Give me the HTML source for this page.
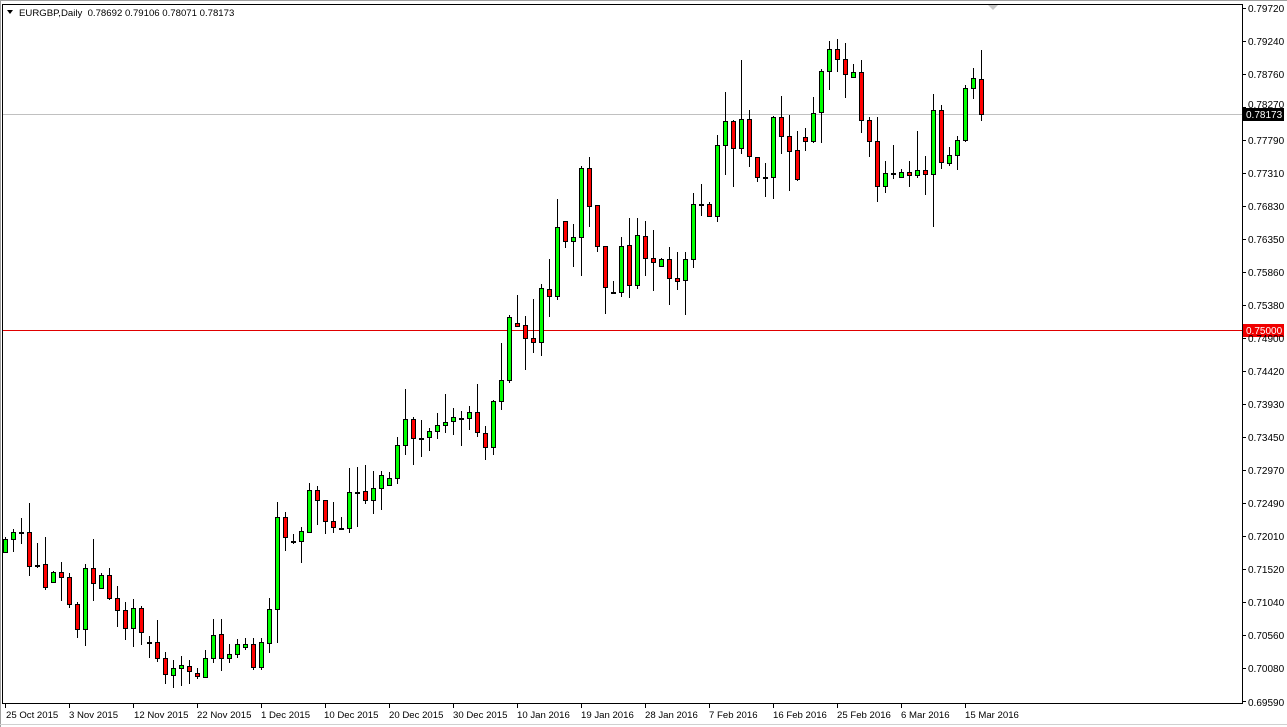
<!DOCTYPE html>
<html><head><meta charset="utf-8">
<style>
html,body{margin:0;padding:0;background:#fff;width:1287px;height:727px;overflow:hidden}
svg{display:block}
text{font-family:"Liberation Sans",sans-serif;font-size:9.6px;fill:#000}
text.y{font-size:10px}
</style></head><body>
<svg id="c" width="1287" height="727" xmlns="http://www.w3.org/2000/svg">
<rect x="0" y="0" width="1287" height="727" fill="#fff"/>
<line x1="0" y1="0.5" x2="1287" y2="0.5" stroke="#a0a0a0"/>
<line x1="0.5" y1="0" x2="0.5" y2="727" stroke="#a0a0a0"/>
<line x1="0" y1="724.5" x2="1287" y2="724.5" stroke="#d0d0d0"/>
<rect x="2.5" y="4.5" width="1240" height="699" fill="none" stroke="#000"/>
<polygon points="988,5 998,5 993,10" fill="#c8c8c8"/>
<line x1="3" y1="114.5" x2="1242" y2="114.5" stroke="#c0c0c0"/>
<line x1="3" y1="330.5" x2="1242" y2="330.5" stroke="#e00000"/>
<g id="candles"></g>
<polygon points="7,10 13,10 10,14" fill="#000"/>
<text x="19" y="16">EURGBP,Daily&#160; 0.78692 0.79106 0.78071 0.78173</text>
<g id="yax"></g>
<rect x="1243" y="108" width="41" height="13" fill="#000"/>
<text class="y" x="1246" y="118" style="fill:#fff">0.78173</text>
<rect x="1243" y="324" width="41" height="13" fill="#f00000"/>
<text class="y" x="1246" y="334" style="fill:#fff">0.75000</text>
<g id="xax"></g>
<text x="6" y="718">25 Oct 2015</text>
<text x="69" y="718">3 Nov 2015</text>
<text x="134" y="718">12 Nov 2015</text>
<text x="197" y="718">22 Nov 2015</text>
<text x="261" y="718">1 Dec 2015</text>
<text x="324" y="718">10 Dec 2015</text>
<text x="389" y="718">20 Dec 2015</text>
<text x="453" y="718">30 Dec 2015</text>
<text x="517" y="718">10 Jan 2016</text>
<text x="581" y="718">19 Jan 2016</text>
<text x="645" y="718">28 Jan 2016</text>
<text x="709" y="718">7 Feb 2016</text>
<text x="773" y="718">16 Feb 2016</text>
<text x="837" y="718">25 Feb 2016</text>
<text x="901" y="718">6 Mar 2016</text>
<text x="965" y="718">15 Mar 2016</text>
<text class="y" x="1248" y="12">0.79720</text>
<text class="y" x="1248" y="45">0.79240</text>
<text class="y" x="1248" y="78">0.78760</text>
<text class="y" x="1248" y="108">0.78270</text>
<text class="y" x="1248" y="144">0.77790</text>
<text class="y" x="1248" y="177">0.77310</text>
<text class="y" x="1248" y="210">0.76830</text>
<text class="y" x="1248" y="243">0.76350</text>
<text class="y" x="1248" y="276">0.75860</text>
<text class="y" x="1248" y="309">0.75380</text>
<text class="y" x="1248" y="342">0.74900</text>
<text class="y" x="1248" y="375">0.74420</text>
<text class="y" x="1248" y="408">0.73930</text>
<text class="y" x="1248" y="441">0.73450</text>
<text class="y" x="1248" y="474">0.72970</text>
<text class="y" x="1248" y="507">0.72490</text>
<text class="y" x="1248" y="540">0.72010</text>
<text class="y" x="1248" y="573">0.71520</text>
<text class="y" x="1248" y="606">0.71040</text>
<text class="y" x="1248" y="639">0.70560</text>
<text class="y" x="1248" y="672">0.70080</text>
<text class="y" x="1248" y="706">0.69590</text>
</svg>
<script>
var D=[
['g',539,552,537,553],['g',532,539,529,552],['d',532,532,518,544],['r',532,566,503,576],['d',565,565,543,568],
['r',564,587,537,590],['g',572,582,571,583],['r',572,577,562,601],['r',577,604,573,608],['r',604,629,602,638],
['g',568,629,564,646],['r',568,583,539,601],['g',575,588,573,589],['r',575,598,568,600],['r',598,610,586,627],
['r',610,628,602,640],['g',608,628,599,647],['r',608,632,606,645],['d',642,642,636,658],['r',642,658,620,662],
['r',658,674,652,684],['g',668,675,660,688],['g',665,668,656,686],['r',666,671,660,684],['r',673,676,668,679],
['g',658,677,650,678],['g',635,658,619,663],['r',634,658,619,671],['g',654,658,644,663],['g',644,654,639,658],
['g',644,646,638,650],['r',644,667,638,670],['g',642,667,638,670],['g',609,643,598,653],['g',517,609,502,643],
['r',517,537,512,551],['d',541,541,534,544],['g',531,541,527,563],['g',490,532,483,533],['r',490,500,486,525],
['r',500,521,500,534],['r',521,527,502,533],['d',528,528,517,530],['g',492,528,468,533],['d',492,492,467,527],
['r',491,500,465,504],['g',488,500,471,514],['g',475,488,471,510],['g',478,485,472,486],['g',445,478,437,484],
['g',419,445,389,455],['r',419,438,417,465],['d',438,438,420,457],['g',431,437,428,451],['g',425,431,413,439],
['g',422,425,394,433],['g',417,421,408,435],['d',418,418,411,446],['g',412,418,406,430],['r',412,432,384,437],
['r',433,447,426,460],['g',401,447,400,455],['g',380,401,343,410],['g',317,380,315,383],['r',323,325,295,327],
['r',325,338,316,370],['r',338,342,299,353],['g',288,342,284,356],['r',289,296,259,317],['g',227,296,199,300],
['r',221,241,221,248],['g',237,241,224,267],['g',168,237,166,276],['r',168,206,157,227],['r',205,246,205,252],
['r',246,287,246,314],['d',292,292,281,294],['g',246,292,237,297],['r',245,285,218,298],['g',235,285,218,289],
['r',236,258,221,276],['r',258,262,230,291],['g',259,266,258,267],['r',259,278,247,305],['r',278,280,252,290],
['g',259,280,252,315],['g',204,259,193,268],['d',204,204,184,216],['r',204,216,202,217],['g',145,216,135,222],
['g',121,145,92,175],['r',121,148,120,187],['g',119,148,60,154],['r',119,156,110,167],['r',157,177,157,182],
['d',177,177,163,197],['g',117,177,116,199],['r',117,136,96,154],['r',136,151,115,191],['r',150,179,131,181],
['r',137,141,128,151],['g',113,141,97,143],['g',71,112,69,143],['g',49,71,41,90],['r',49,59,39,72],
['r',59,74,43,98],['g',72,77,64,78],['r',72,120,60,133],['r',120,141,117,157],['r',141,186,117,202],
['g',173,186,161,193],['d',173,173,145,179],['g',172,177,169,178],['r',172,175,161,187],['g',170,175,131,178],
['r',170,174,156,195],['g',110,174,94,227],['r',110,162,105,169],['g',155,163,147,166],['g',140,155,136,170],
['g',88,140,85,142],['g',78,88,68,99],['r',79,114,50,121]
];
var g=document.getElementById('candles'),h='';
for(var i=0;i<D.length;i++){var c=D[i],x=5+8*i;
h+='<rect x="'+x+'" y="'+c[3]+'" width="1" height="'+(c[4]-c[3])+'" fill="#000"/>';
if(c[0]=='d'){h+='<rect x="'+(x-2)+'" y="'+c[1]+'" width="5" height="2" fill="#000"/>';}
else{var t=c[1],b=c[2];if(b-t<3)b=t+3;
h+='<rect x="'+(x-2)+'" y="'+t+'" width="5" height="'+(b-t+1)+'" fill="#000"/>';
h+='<rect x="'+(x-1)+'" y="'+(t+1)+'" width="3" height="'+(b-t-1)+'" fill="'+(c[0]=='g'?'#00ff00':'#ff0000')+'"/>';}}
g.innerHTML=h;
var y='';for(var k=0;k<22;k++){var yy=8+k*33;y+='<rect x="1242" y="'+yy+'" width="4" height="1" fill="#000"/>';}
document.getElementById('yax').innerHTML=y;
var xs='';for(var k=0;k<16;k++){var xx=5+64*k;xs+='<rect x="'+xx+'" y="703" width="1" height="5" fill="#000"/>';}
document.getElementById('xax').innerHTML=xs;
</script>
</body></html>
